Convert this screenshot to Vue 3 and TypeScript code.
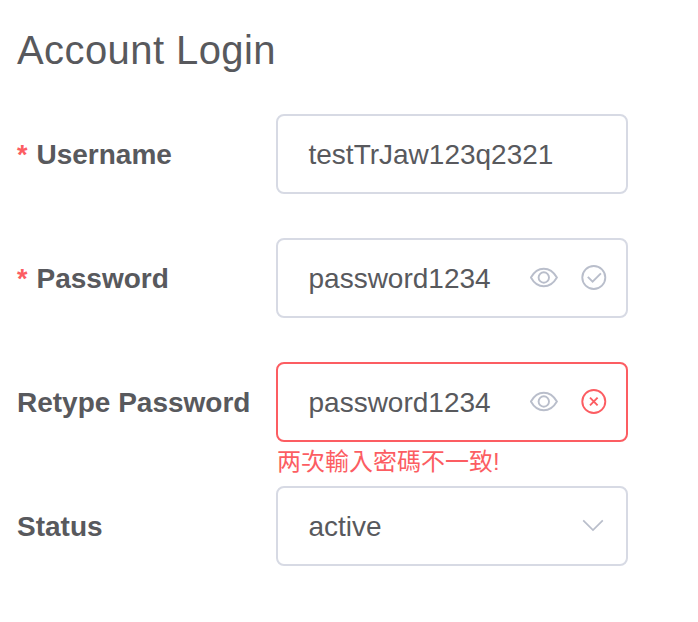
<script setup lang="ts">
import { ref } from 'vue'

interface Field {
  label: string
  value: string
  required: boolean
  kind: 'text' | 'password' | 'select'
  state: '' | 'success' | 'error'
  message: string
}

const fields = ref<Field[]>([
  { label: 'Username', value: 'testTrJaw123q2321', required: true, kind: 'text', state: '', message: '' },
  { label: 'Password', value: 'password1234', required: true, kind: 'password', state: 'success', message: '' },
  { label: 'Retype Password', value: 'password1234', required: false, kind: 'password', state: 'error', message: '两次輸入密碼不一致!' },
  { label: 'Status', value: 'active', required: false, kind: 'select', state: '', message: '' },
])
</script>

<template>
  <main class="page">
    <h1 class="title">Account Login</h1>
    <form class="form" @submit.prevent>
      <div v-for="field in fields" :key="field.label" class="row">
        <label class="label"><span v-if="field.required" class="star">*</span><span>{{ field.label }}</span></label>
        <div class="control">
          <div class="box" :class="{ invalid: field.state === 'error' }">
            <span class="value">{{ field.value }}</span>
            <svg v-if="field.kind === 'password'" class="icon eye" viewBox="0 0 28 28">
              <path d="M0.9 13.5C4.2 7.6 8.5 4.7 13.8 4.7S23.5 7.6 26.9 13.5C23.5 19.4 19.1 22.3 13.8 22.3S4.2 19.4 0.9 13.5Z" />
              <circle cx="13.8" cy="13.5" r="5.2" />
            </svg>
            <svg v-if="field.state" class="icon status" viewBox="0 0 28 28">
              <circle cx="13.8" cy="13.5" r="11.5" />
              <path v-if="field.state === 'success'" d="M7.8 12.9L12.6 17.7L20.9 9.4" />
              <path v-else d="M10 9.7L17.6 17.3M17.6 9.7L10 17.3" />
            </svg>
            <svg v-if="field.kind === 'select'" class="icon arrow" viewBox="0 0 28 28">
              <path d="M3.2 8.3L13 18.1L22.8 8.3" />
            </svg>
          </div>
          <p v-if="field.message" class="message">{{ field.message }}</p>
        </div>
      </div>
    </form>
  </main>
</template>

<style>
body {
  background: #fff;
}
</style>

<style scoped>
.page {
  box-sizing: border-box;
  width: 698px;
  height: 622px;
  padding: 26px 70px 0 17px;
  overflow: hidden;
  color: #58595d;
  font-family: "Liberation Sans", "Noto Sans CJK TC", sans-serif;
}
.title {
  margin: 0 0 40px;
  font-size: 40px;
  font-weight: 400;
  line-height: 48px;
  letter-spacing: 0.42px;
}
.form {
  display: flex;
  flex-direction: column;
}
.row {
  display: grid;
  grid-template-columns: 259px 352px;
  height: 124px;
}
.label {
  box-sizing: border-box;
  display: flex;
  height: 80px;
  padding-top: 2px;
  align-items: center;
  font-size: 28px;
  font-weight: 700;
  white-space: nowrap;
}
.star {
  width: 11px;
  margin-right: 8.5px;
  color: #fc5d62;
  font-size: 27px;
}
.box {
  box-sizing: border-box;
  display: flex;
  align-items: center;
  height: 80px;
  padding: 0 18px 0 30.5px;
  border: 2px solid #d7dae4;
  border-radius: 8px;
}
.value {
  flex: 1;
  padding-top: 2px;
  font-size: 28px;
}
.icon {
  width: 28px;
  height: 28px;
  fill: none;
  stroke: #b9becb;
  stroke-width: 1.9;
}
.eye {
  margin-right: 22px;
}
.arrow {
  stroke-width: 1.7;
}
.invalid {
  border-color: #fc5d62;
}
.invalid .status {
  stroke: #fc5d62;
}
.message {
  margin: 4px 0 0 1px;
  color: #fc5d62;
  font-size: 24px;
  line-height: 32px;
}
</style>
